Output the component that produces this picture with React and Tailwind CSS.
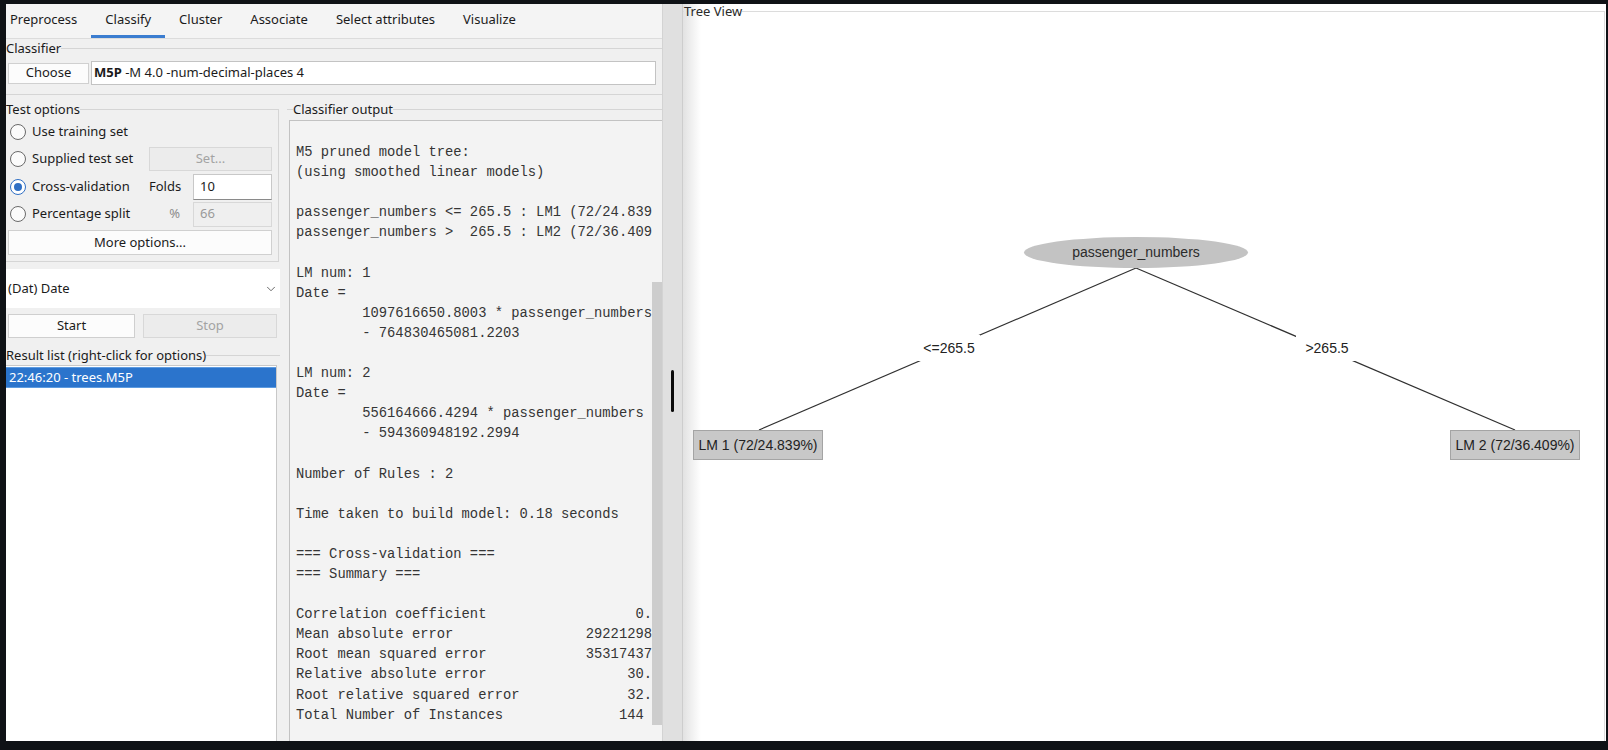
import React from "react";
import { ChevronDown } from "lucide-react";

const tabs = ["Preprocess", "Classify", "Cluster", "Associate", "Select attributes", "Visualize"];

const pad = (n) => " ".repeat(n);

// only the part that fits before the scrollbar is shown in the reference
const output = [
  "M5 pruned model tree:",
  "(using smoothed linear models)",
  "",
  "passenger_numbers <= 265.5 : LM1 (72/24.839",
  "passenger_numbers >  265.5 : LM2 (72/36.409",
  "",
  "LM num: 1",
  "Date =",
  pad(8) + "1097616650.8003 * passenger_numbers",
  pad(8) + "- 764830465081.2203",
  "",
  "LM num: 2",
  "Date =",
  pad(8) + "556164666.4294 * passenger_numbers",
  pad(8) + "- 594360948192.2994",
  "",
  "Number of Rules : 2",
  "",
  "Time taken to build model: 0.18 seconds",
  "",
  "=== Cross-validation ===",
  "=== Summary ===",
  "",
  "Correlation coefficient" + pad(18) + "0.",
  "Mean absolute error" + pad(16) + "29221298",
  "Root mean squared error" + pad(12) + "35317437",
  "Relative absolute error" + pad(17) + "30.",
  "Root relative squared error" + pad(13) + "32.",
  "Total Number of Instances" + pad(14) + "144",
];

const Radio = ({ checked }) => (
  <span
    className={
      checked
        ? "w-[16px] h-[16px] rounded-full border border-[#2f6fc4] bg-white flex items-center justify-center shrink-0"
        : "w-[16px] h-[16px] rounded-full border border-[#6a6a6a] bg-[#fbfbfb] shrink-0"
    }
  >
    {checked && <span className="w-[8px] h-[8px] rounded-full bg-[#2f6fc4]" />}
  </span>
);

const OptionRow = ({ label, checked, children, className }) => (
  <div className={"flex items-center h-[26px] " + (className || "")}>
    <div className="w-[143px] flex items-center gap-[6px] pl-[4px]">
      <Radio checked={checked} />
      <span>{label}</span>
    </div>
    {children}
  </div>
);

const App = () => {
  return (
    <div className="w-[1608px] h-[750px] bg-[#0f1216] pt-[4px] pl-[6px] pr-[2px] pb-[9px] flex overflow-hidden font-[family-name:'Noto_Sans','Open_Sans',sans-serif]">
      {/* left weka panel */}
      <div className="w-[657px] h-full bg-[#f0f0f0] border-r border-[#d3d3d3] flex flex-col text-[13px] text-[#1b1b1b]">
        <div className="h-[35px] bg-[#f4f4f4] border-b border-[#dcdcdc] flex">
          {tabs.map((t, i) => (
            <div
              key={t}
              className={
                (i === 0 ? "pl-[4px] pr-[14px] " : "px-[14px] ") +
                "h-full flex items-center border-b-[3px] " +
                (t === "Classify" ? "border-[#3b7dd0]" : "border-transparent")
              }
            >
              {t}
            </div>
          ))}
        </div>

        <fieldset className="border-t border-b border-[#d5d5d5] pb-[9px]">
          <legend className="leading-[18px]">Classifier</legend>
          <div className="flex items-center h-[24px] mt-[4px] pr-[6px]">
            <button className="ml-[2px] w-[81px] h-[21px] bg-[#fcfcfc] border border-[#d0d0d0] flex items-center justify-center">
              Choose
            </button>
            <div className="ml-[2px] flex-1 h-[24px] bg-white border border-[#c3c3c3] flex items-center pl-[2px]">
              <span className="font-bold">M5P</span>
              <span>&nbsp;-M 4.0 -num-decimal-places 4</span>
            </div>
          </div>
        </fieldset>

        <div className="h-[646px] flex">
          {/* test options column */}
          <div className="w-[274px] shrink-0 flex flex-col">
            <fieldset className="mt-[5px] mr-[2px] border-t border-r border-b border-[#d5d5d5] pr-[6px] pb-[6px]">
              <legend className="leading-[18px]">Test options</legend>
              <div className="flex flex-col pt-[1px]">
                <OptionRow label="Use training set" />
                <OptionRow label="Supplied test set" className="mt-[1px]">
                  <div className="w-[123px] h-[24px] bg-[#ececec] border border-[#d8d8d8] text-[#a3a3a3] flex items-center justify-center">
                    Set...
                  </div>
                </OptionRow>
                <OptionRow label="Cross-validation" checked className="mt-[2px]">
                  <span className="w-[44px]">Folds</span>
                  <div className="w-[79px] h-[26px] bg-white border border-[#c8c8c8] border-b-[#8a8a8a] flex items-center pl-[6px]">
                    10
                  </div>
                </OptionRow>
                <OptionRow label="Percentage split" className="mt-[1px]">
                  <span className="w-[44px] text-right pr-[13px] text-[#8d8d8d]">%</span>
                  <div className="w-[79px] h-[25px] bg-[#efefef] border border-[#d8d8d8] text-[#9a9a9a] flex items-center pl-[6px]">
                    66
                  </div>
                </OptionRow>
                <button className="mt-[3px] ml-[2px] h-[25px] bg-[#fcfcfc] border border-[#d0d0d0] flex items-center justify-center">
                  More options...
                </button>
              </div>
            </fieldset>

            <div className="mt-[7px] h-[39px] bg-white flex items-center justify-between pl-[2px] pr-[2px]">
              <span>(Dat) Date</span>
              <ChevronDown size={14} strokeWidth={1.5} className="text-[#555]" />
            </div>

            <div className="mt-[6px] h-[24px] flex pl-[2px] gap-[8px]">
              <button className="w-[127px] h-full bg-[#fcfcfc] border border-[#cfcfcf] flex items-center justify-center">
                Start
              </button>
              <button className="w-[134px] h-full bg-[#ececec] border border-[#d8d8d8] text-[#a3a3a3] flex items-center justify-center">
                Stop
              </button>
            </div>

            <fieldset className="mt-[8px] border-t border-[#d5d5d5]">
              <legend className="leading-[18px]">Result list (right-click for options)</legend>
              <div className="mt-[1px] mr-[3px] h-[376px] bg-white border-t border-r border-[#c8c8c8]">
                <div className="mt-[1px] h-[21px] bg-[#2b74cc] border-y border-[#5d9be0] text-white flex items-center pl-[3px]">
                  22:46:20 - trees.M5P
                </div>
              </div>
            </fieldset>
          </div>

          {/* classifier output column */}
          <div className="flex-1 min-w-0 pl-[7px]">
            <fieldset className="mt-[5px] min-w-0 border-t border-[#d5d5d5]">
              <legend className="ml-[6px] leading-[18px]">Classifier output</legend>
              <div className="mt-[2px] ml-[2px] h-[621px] bg-[#f3f3f3] border-l border-t border-[#c2c2c2] flex">
                <div className="flex-1 min-w-0 overflow-hidden pl-[6px] pt-[22px] font-[family-name:'Liberation_Mono','Courier_New',monospace] text-[13.8px] leading-[20.1px] text-[#353535]">
                  {output.map((line, i) => (
                    <div key={i} className="h-[20.1px] whitespace-pre">
                      {line || " "}
                    </div>
                  ))}
                </div>
                <div className="w-[10px] shrink-0 flex flex-col">
                  <div className="h-[161px]" />
                  <div className="h-[443px] bg-[#cdcdcd]" />
                </div>
              </div>
            </fieldset>
          </div>
        </div>
      </div>

      {/* splitter */}
      <div className="w-[20px] shrink-0 h-full bg-[#e0e0e0] border-r border-[#cdcdcd] pt-[366px]">
        <div className="mx-auto w-[3px] h-[42px] rounded-full bg-[#0a0a0a]" />
      </div>

      {/* tree view */}
      <div className="relative flex-1 h-full bg-[linear-gradient(to_right,#e2e2e2_0px,#ffffff_18px)] font-[family-name:'Liberation_Sans',Arial,sans-serif]">
        <fieldset className="h-full mr-[1px] border-t border-r border-[#dcdcdc]">
          <legend className="ml-[1px] text-[13px] leading-[14px] text-[#2a2a2a] font-[family-name:'Noto_Sans','Open_Sans',sans-serif]">
            Tree View
          </legend>
        </fieldset>

        <svg className="absolute left-0 top-0" width="923" height="737">
          <line x1="453" y1="264" x2="76" y2="426" stroke="#303030" strokeWidth="1.2" />
          <line x1="453" y1="264" x2="832" y2="426" stroke="#303030" strokeWidth="1.2" />
        </svg>

        <div className="absolute left-[341px] top-[233px] w-[224px] h-[31px] rounded-[50%] bg-[#c3c3c3] flex items-center justify-center text-[14px] text-[#2b2b2b]">
          passenger_numbers
        </div>

        <div className="absolute left-[235px] top-[331px] w-[62px] h-[26px] bg-white flex items-center justify-center text-[14px] text-[#222]">
          &lt;=265.5
        </div>
        <div className="absolute left-[613px] top-[331px] w-[62px] h-[26px] bg-white flex items-center justify-center text-[14px] text-[#222]">
          &gt;265.5
        </div>

        <div className="absolute left-[10px] top-[426px] w-[130px] h-[30px] bg-[#c8c8c8] border border-[#a4a4a4] flex items-center justify-center text-[14px] text-[#222]">
          LM 1 (72/24.839%)
        </div>
        <div className="absolute left-[767px] top-[426px] w-[130px] h-[30px] bg-[#c8c8c8] border border-[#a4a4a4] flex items-center justify-center text-[14px] text-[#222]">
          LM 2 (72/36.409%)
        </div>
      </div>
    </div>
  );
};

export default App;
